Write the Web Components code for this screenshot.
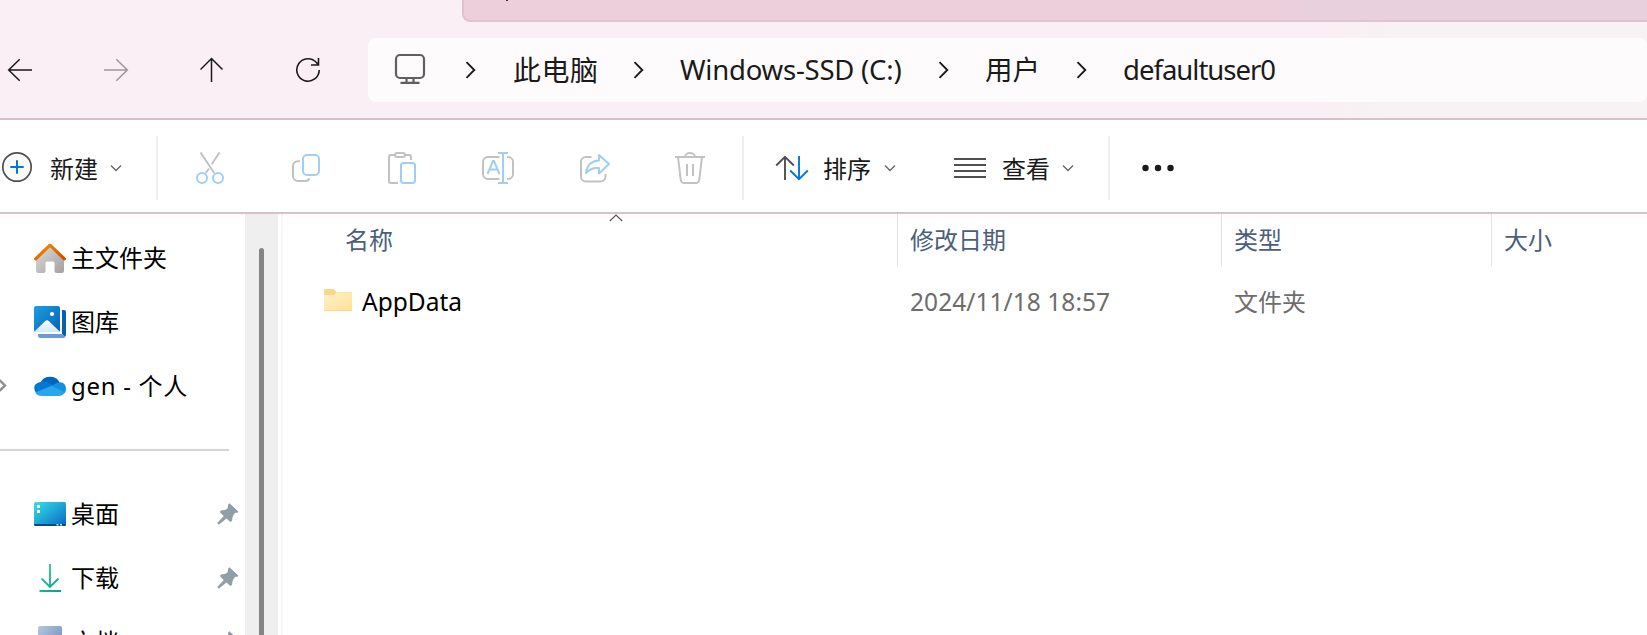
<!DOCTYPE html>
<html lang="zh-CN">
<head>
<meta charset="utf-8">
<title>defaultuser0</title>
<style>
    html, body {
        margin: 0;
        height: 100%;
        overflow: hidden;
        background: #fff;
    }
    body {
        font-family: "Noto Sans", "Noto Sans CJK SC", sans-serif;
        color: #1a1a1a;
    }
</style>
</head>
<body>
<file-explorer>
    <nav-bar slot="nav">
        <crumb-item style="width: 168px; font-size: 28px; letter-spacing: .5px">此电脑</crumb-item>
        <crumb-item style="width: 305px; letter-spacing: -.22px">Windows-SSD (C:)</crumb-item>
        <crumb-item style="width: 138px">用户</crumb-item>
        <crumb-item style="letter-spacing: -1px">defaultuser0</crumb-item>
    </nav-bar>
    <command-bar slot="commands"></command-bar>
    <side-bar slot="side">
        <side-item icon="home">主文件夹</side-item>
        <side-item icon="gallery">图库</side-item>
        <side-item icon="cloud" expandable style="letter-spacing: .7px">gen - 个人</side-item>
        <side-line></side-line>
        <side-item icon="desktop" pinned>桌面</side-item>
        <side-item icon="download" pinned>下载</side-item>
        <side-item icon="doc" pinned>文档</side-item>
    </side-bar>
    <file-list slot="files">
        <file-row name="AppData" date="2024/11/18 18:57" type="文件夹"></file-row>
    </file-list>
</file-explorer>

<script>
const icons = {
    back: [26, 24, `<g fill="none" stroke="#1a1a1a" stroke-width="1.5"><path d="M1.5 12H25M12.7 1.2 1.7 12l11 10.8"/></g>`],
    forward: [26, 24, `<g fill="none" stroke="#9c9699" stroke-width="1.5"><path d="M1 12h23.500M13.300 1.200l11 10.800-11 10.800"/></g>`],
    up: [24, 26, `<g fill="none" stroke="#1a1a1a" stroke-width="1.5"><path d="M11.500 1.500V25M.500 12.500l11-11 11 11"/></g>`],
    refresh: [26, 26, `<g fill="none" stroke="#1a1a1a" stroke-width="1.6"><path d="M24.200 13A11.200 11.200 0 1 1 21.600 5.800L23.500 8M23.500 1v7h-7.500"/></g>`],
    pc: [32, 32, `<g fill="none" stroke="#5f5f5f" stroke-width="2.200"><rect x="2" y="2" width="28" height="23" rx="4"/><path d="M12.500 25v4.500M19.500 25v4.500M6.500 29.800h19"/></g>`],
    crumb: [12, 20, `<path d="M1.500 2.200 9.300 10l-7.800 7.800" fill="none" stroke="#1a1a1a" stroke-width="1.9"/>`],
    down: [12, 8, `<path d="M1 1.500l5 5 5-5" fill="none" stroke="#666" stroke-width="1.4"/>`],
    add: [32, 32, `<circle cx="16" cy="16" r="14.200" fill="#fafafa" stroke="#505050" stroke-width="1.7"/><path d="M16 9.300v13.400M9.300 16h13.400" stroke="#0078d4" stroke-width="2"/>`],
    cut: [32, 32, `<g fill="none" stroke-width="2"><path d="M6.500.500 20.200 21M25.500.500 17.700 12.200M15 16.500 11.800 21" stroke="#c2c2c2"/><g stroke="#a2cef1"><circle cx="8" cy="26" r="5"/><circle cx="24" cy="26" r="5"/></g></g>`],
    copy: [32, 32, `<g fill="none" stroke-width="2"><path d="M10 9.200H8A5 5 0 0 0 3 14v10a5 5 0 0 0 5 5h7a5 5 0 0 0 4.500-2.800" stroke="#c2c2c2"/><rect x="13" y="3" width="16" height="20" rx="4" stroke="#a2cef1"/></g>`],
    paste: [32, 32, `<g fill="none" stroke-width="2"><path d="M9 3H5a2 2 0 0 0-2 2v24a2 2 0 0 0 2 2h7M19 3h4a2 2 0 0 1 2 2v3" stroke="#c2c2c2"/><rect x="9" y="1" width="10" height="4" rx="2" stroke="#c2c2c2"/><rect x="15" y="11" width="14" height="20" rx="2.500" stroke="#a2cef1"/></g>`],
    rename: [32, 32, `<g fill="none" stroke-width="2"><path d="M17.500 5H6a5 5 0 0 0-5 5v12a5 5 0 0 0 5 5h11.500M25 5h1a5 5 0 0 1 5 5v12a5 5 0 0 1-5 5h-1" stroke="#c2c2c2"/><path d="M5.500 22 11 9h1l5.500 13M7.800 17.500h7.400M21 1v30M16 1h10M16 31h10" stroke="#a2cef1"/></g>`],
    share: [32, 32, `<g fill="none" stroke-width="2"><path d="M13.500 5H8a5 5 0 0 0-5 5v14.500a5 5 0 0 0 5 5h14.500a5 5 0 0 0 5-5V22" stroke="#c2c2c2"/><path d="M21 3l10 9-10 9.500v-5.500c-5.500-.500-9.500 1-13 5C9 13 14 8.800 21 8.500z" stroke="#a2cef1" stroke-linejoin="round"/></g>`],
    trash: [32, 32, `<g fill="none" stroke="#c2c2c2" stroke-width="2"><path d="M1 5h30M11 5a5 4 0 0 1 10 0M4 5l2.700 22.500A3.800 3.800 0 0 0 10.500 31h11a3.800 3.800 0 0 0 3.800-3.500L28 5M13 12v12M19 12v12"/></g>`],
    sort: [34, 26, `<g fill="none" stroke-width="1.900"><path d="M10 25V1.800M1.200 10.500 10 1.800l8.800 8.700" stroke="#505050"/><path d="M24 1v23.200M15.200 15.500 24 24.200l8.800-8.700" stroke="#0078d4"/></g>`],
    view: [32, 20, `<path d="M0 1h32M0 7h32M0 13h32M0 19h32" stroke="#505050" stroke-width="1.900"/>`],
    more: [34, 8, `<g fill="#1a1a1a"><circle cx="4.500" cy="4" r="3.200"/><circle cx="17" cy="4" r="3.200"/><circle cx="29.500" cy="4" r="3.200"/></g>`],
    home: [32, 32, `<defs><linearGradient id="a" x2="1" y2="1"><stop stop-color="#dedede"/><stop offset="1" stop-color="#a0a0a0"/></linearGradient><linearGradient id="b" x2="1" y2="1"><stop stop-color="#f59300"/><stop offset="1" stop-color="#d64700"/></linearGradient></defs><path d="M2 16 16 3l14 13v12.500a2.500 2.500 0 0 1-2.500 2.500H22.500a2 2 0 0 1-2-2v-8a1.500 1.500 0 0 0-1.500-1.500h-6a1.500 1.500 0 0 0-1.500 1.500v8a2 2 0 0 1-2 2H4.500A2.500 2.500 0 0 1 2 28.500z" fill="url(#a)"/><path d="M1.700 16.800 16 3.200l14.300 13.600" fill="none" stroke="url(#b)" stroke-width="3.200" stroke-linecap="round" stroke-linejoin="round"/>`],
    gallery: [32, 32, `<defs><linearGradient id="a" x2="1" y2="1"><stop stop-color="#1ba0e2"/><stop offset="1" stop-color="#0560b6"/></linearGradient><linearGradient id="b" x2="0" y2="1"><stop stop-color="#fff"/><stop offset="1" stop-color="#d2e8fb"/></linearGradient></defs><path d="M28 4h2a2 2 0 0 1 2 2v23l-1 2-3-3z" fill="#075fb4"/><path d="M4 28h24l3.500 3-1.500 1H6.500A2.500 2.500 0 0 1 4 29.500z" fill="#6a9bd3"/><rect width="26" height="26" rx="2" fill="url(#a)"/><path d="M.500 25.500 11 15.200a3 3 0 0 1 4 0l10.700 10.300-1.700.500H2z" fill="url(#b)"/><circle cx="18" cy="8" r="2.100" fill="#fff"/>`],
    cloud: [32, 22, `<path d="M6.500 7.500A10.500 9.500 0 0 1 25.700 7.500L16 14z" fill="#0364b8"/><path d="M6.500 7C10 5.500 13 6.500 16 8.500l6.500 4-16.500 7.500H5C.500 18-1.500 12 2 9a8 8 0 0 1 4.500-2z" fill="#0078d4"/><path d="M20 9.500a9 9 0 0 1 5.700-2.300C30 7 32 10.500 32 13.800c0 1.700-.500 3-1.500 4.500L16.500 11z" fill="#1490df"/><path d="M1.300 17.500 17.500 10.700 30.800 17.500C29.500 19.700 27.500 21 25 21H8c-3.500 0-5.500-1.500-6.700-3.500z" fill="#28a8ea"/>`],
    desktop: [32, 24, `<defs><linearGradient id="a" x2="1" y2="1"><stop stop-color="#35e2e6"/><stop offset="1" stop-color="#0867c4"/></linearGradient></defs><rect width="32" height="24" rx="1.500" fill="url(#a)"/><path d="M0 22h32v.800L31 24H1l-1-1.200z" fill="#0b4a80"/><path d="M3 3h3v3H3zM3 8h3v3H3z" fill="#fff"/><path d="M22.500 22h2v1.500h-2zM26 22h2v1.500h-2z" fill="#cfe4f5"/>`],
    download: [32, 28, `<defs><linearGradient id="a" gradientUnits="userSpaceOnUse" x1="5" y1="0" x2="27" y2="28"><stop stop-color="#3bd694"/><stop offset="1" stop-color="#0c9c97"/></linearGradient></defs><g fill="none" stroke="url(#a)" stroke-width="1.900"><path d="M16 0l.010 23M7.500 14.500 16 23l8.500-8.500M5.500 27l21.500.010"/></g>`],
    doc: [32, 32, `<defs><linearGradient id="a" x2="1" y2="1"><stop stop-color="#b6c8dd"/><stop offset="1" stop-color="#5d86b8"/></linearGradient></defs><rect x="4" width="24" height="32" rx="2" fill="url(#a)"/>`],
    expand: [8, 14, `<path d="M-.500 1 5 6.500l-5.500 5.500" fill="none" stroke="#8d8d8d" stroke-width="2.400"/>`],
    pin: [22, 22, `<path d="M12.500.300 21 8.200c.700.900-.300 1.800-1.800 1.600-.900-.100-1.600.600-2.200 1.500-1.500 2-1.500 3.500-1.800 5.500-.200 1.800-1.800 2.500-3 1.300L9.500 15.500 2.300 21.300C.800 21.500.200 20.500.700 19.500L6.800 13 3.800 10.300c-1.200-1.100-.700-2.700 1-3 2-.300 4 0 5.500-1.800C11.500 4 10.300 1.200 12.500.300z" fill="#929ea6"/>`],
    folder: [28, 22, `<defs><linearGradient id="a" x2="1" y2="1"><stop stop-color="#fff0c8"/><stop offset="1" stop-color="#ffe294"/></linearGradient></defs><path d="M0 1a1 1 0 0 1 1-1h8.500L12.500 3H27a1 1 0 0 1 1 1v5H0z" fill="#fbd78a"/><path d="M0 6h9.500l2.500-2.500H27a1 1 0 0 1 1 1V21a1 1 0 0 1-1 1H1a1 1 0 0 1-1-1z" fill="url(#a)"/><path d="M.500 21.500h27" stroke="#f7d98d"/>`],
    sorted: [14, 8, `<path d="M.800 7 7 1l6.200 6" fill="none" stroke="#555" stroke-width="1.200"/>`]
}

class ExIcon extends HTMLElement {
    connectedCallback() {
        const [w, h, body] = icons[this.getAttribute('name')]
        this.attachShadow({ mode: 'open' })
        this.shadowRoot.innerHTML = `
            <style>
                :host { display: block; flex: none; width: ${w}px; height: ${h}px; }
                svg { display: block; }
            </style>
            <svg width="${w}" height="${h}" viewBox="0 0 ${w} ${h}">${body}</svg>`
    }
}
customElements.define('ex-icon', ExIcon)

// Registers an element whose shadow root is cloned from the given markup
function define(tag, html) {
    const template = document.createElement('template')
    template.innerHTML = html
    customElements.define(tag, class extends HTMLElement {
        constructor() {
            super()
            this.attachShadow({ mode: 'open' })
            this.shadowRoot.appendChild(template.content.cloneNode(true))
        }
    })
}

define('file-explorer', `
    <style>
        :host { display: flex; flex-direction: column; height: 100%; }
        .body { display: flex; flex: 1; min-height: 0; }
    </style>
    <slot name="nav"></slot>
    <slot name="commands"></slot>
    <div class="body">
        <slot name="side"></slot>
        <slot name="files"></slot>
    </div>
`)

define('nav-bar', `
    <style>
        :host {
            display: flex;
            flex-direction: column;
            box-sizing: border-box;
            flex: none;
            height: 120px;
            border-bottom: 2px solid #d9c1cb;
            background: linear-gradient(100deg, #faeff5 0, #faeff4 80%, #f7f2f4 84%);
        }
        .tab {
            box-sizing: border-box;
            height: 22px;
            margin: 0 -10px 16px 462px;
            border: solid #dcc3ce;
            border-width: 0 0 2px 2px;
            border-radius: 0 0 0 8px;
            background: linear-gradient(100deg, #edcfdb 0, #edcfdc 68%, #e8d1dd 71%);
        }
        .mark { width: 2px; height: 1px; margin-left: 42px; background: #333; }
        .row { display: flex; height: 64px; }
        .buttons {
            display: grid;
            grid-template-columns: repeat(4, 96px);
            place-items: center;
            width: 340px;
            margin-left: -28px;
            padding-bottom: 1px;
        }
        .address {
            display: flex;
            align-items: center;
            flex: 1;
            margin-left: 56px;
            border-radius: 8px;
            background: #fdfbfc;
        }
        .pc { margin: -3px 0 0 26px; }
    </style>
    <div class="tab"><div class="mark"></div></div>
    <div class="row">
        <div class="buttons">
            <ex-icon name="back"></ex-icon>
            <ex-icon name="forward"></ex-icon>
            <ex-icon name="up"></ex-icon>
            <ex-icon name="refresh"></ex-icon>
        </div>
        <div class="address">
            <ex-icon class="pc" name="pc"></ex-icon>
            <slot></slot>
        </div>
    </div>
`)

define('crumb-item', `
    <style>
        :host {
            display: flex;
            align-items: center;
            flex: none;
            gap: 35px;
            font-size: 27.5px;
            line-height: 40px;
            white-space: nowrap;
        }
        :host(:first-of-type) { gap: 36px; margin-left: 39px; }
    </style>
    <ex-icon name="crumb"></ex-icon>
    <span><slot></slot></span>
`)

define('command-bar', `
    <style>
        :host {
            display: flex;
            align-items: center;
            box-sizing: border-box;
            flex: none;
            height: 94px;
            padding-top: 4px;
            border-bottom: 2px solid #d9c1cb;
            background: #fff;
            font-size: 24px;
            line-height: 36px;
        }
        .button { display: flex; align-items: center; }
        .label { width: 49px; margin: 2px 12px 0 16px; white-space: nowrap; }
        .new { width: 155px; padding-left: 1px; }
        .sort { width: 179px; margin-left: 31px; }
        .view { width: 154px; }
        .line { width: 2px; height: 64px; background: #eee; }
        .tools {
            display: grid;
            grid-template-columns: repeat(6, 96px);
            justify-items: center;
            margin: 0 4px;
        }
        .new ex-icon:first-child { margin-top: -2px; }
        .new .label { margin: 2px 11px 0 17px; }
        .more { margin: 0 0 0 31px; }
        .sort .label { margin: 2px 12px 0 14px; }
        .view .label { margin-right: 11px; }
    </style>
    <div class="button new"><ex-icon name="add"></ex-icon><span class="label">新建</span><ex-icon name="down"></ex-icon></div>
    <div class="line"></div>
    <div class="tools">
        <ex-icon name="cut"></ex-icon>
        <ex-icon name="copy"></ex-icon>
        <ex-icon name="paste"></ex-icon>
        <ex-icon name="rename"></ex-icon>
        <ex-icon name="share"></ex-icon>
        <ex-icon name="trash"></ex-icon>
    </div>
    <div class="line"></div>
    <div class="button sort"><ex-icon name="sort"></ex-icon><span class="label">排序</span><ex-icon name="down"></ex-icon></div>
    <div class="button view"><ex-icon name="view"></ex-icon><span class="label">查看</span><ex-icon name="down"></ex-icon></div>
    <div class="line"></div>
    <ex-icon class="more" name="more"></ex-icon>
`)

define('side-bar', `
    <style>
        :host {
            display: flex;
            flex: none;
            box-sizing: border-box;
            width: 283px;
            border-right: 2px solid #f7f7f7;
            overflow: hidden;
        }
        .items { flex: none; width: 245px; padding-top: 12px; }
        .track { width: 33px; background: #efefef; }
        .thumb {
            width: 5px;
            height: 100%;
            margin: 34px 0 0 14px;
            border-radius: 3px;
            background: #858585;
        }
    </style>
    <div class="items"><slot></slot></div>
    <div class="track"><div class="thumb"></div></div>
`)

class SideItem extends HTMLElement {
    connectedCallback() {
        this.attachShadow({ mode: 'open' })
        this.shadowRoot.innerHTML = `
            <style>
                :host {
                    display: flex;
                    align-items: center;
                    height: 64px;
                    font-size: 24px;
                    line-height: 36px;
                    color: #000;
                    white-space: nowrap;
                }
                .lead { width: 34px; }
                .text { flex: 1; margin: -1px 0 0 5px; }
                .pin { margin-right: 6px; }
            </style>
            <div class="lead">${this.hasAttribute('expandable') ? '<ex-icon name="expand"></ex-icon>' : ''}</div>
            <ex-icon name="${this.getAttribute('icon')}"></ex-icon>
            <span class="text"><slot></slot></span>
            ${this.hasAttribute('pinned') ? '<ex-icon class="pin" name="pin"></ex-icon>' : ''}`
    }
}
customElements.define('side-item', SideItem)

define('side-line', `
    <style>
        :host { display: flex; align-items: center; height: 64px; }
        div { width: 229px; height: 2px; background: #d4d6d5; }
    </style>
    <div></div>
`)

define('file-list', `
    <style>
        :host { display: flex; flex-direction: column; flex: 1; background: #fff; }
        .head {
            display: grid;
            grid-template-columns: 615px 324px 270px 1fr;
            height: 51px;
            font-size: 24px;
            line-height: 52px;
            color: #4c607a;
        }
        .head div { box-sizing: border-box; padding-left: 12px; border-right: 1px solid #e3e3e3; }
        .head div:first-child { display: flex; padding-left: 62px; }
        .head div:last-child { border: 0; }
        .arrow { margin: 0 0 0 216px; }
    </style>
    <div class="head">
        <div><span>名称</span><ex-icon class="arrow" name="sorted"></ex-icon></div>
        <div>修改日期</div>
        <div>类型</div>
        <div>大小</div>
    </div>
    <slot></slot>
`)

class FileRow extends HTMLElement {
    connectedCallback() {
        this.attachShadow({ mode: 'open' })
        this.shadowRoot.innerHTML = `
            <style>
                :host {
                    display: grid;
                    grid-template-columns: 615px 324px 1fr;
                    align-items: center;
                    height: 64px;
                    margin-top: 5px;
                    font-size: 24px;
                    line-height: 36px;
                    color: #6d6d6d;
                }
                .name { display: flex; align-items: center; gap: 10px; padding-left: 41px; color: #000; font-size: 24.5px; }
                .name ex-icon { margin-top: -4px; }
                .cell { padding-left: 12px; }
                .date { font-size: 24.5px; letter-spacing: .05px; }
            </style>
            <div class="name"><ex-icon name="folder"></ex-icon><span>${this.getAttribute('name')}</span></div>
            <div class="cell date">${this.getAttribute('date')}</div>
            <div class="cell">${this.getAttribute('type')}</div>`
    }
}
customElements.define('file-row', FileRow)
</script>
</body>
</html>
